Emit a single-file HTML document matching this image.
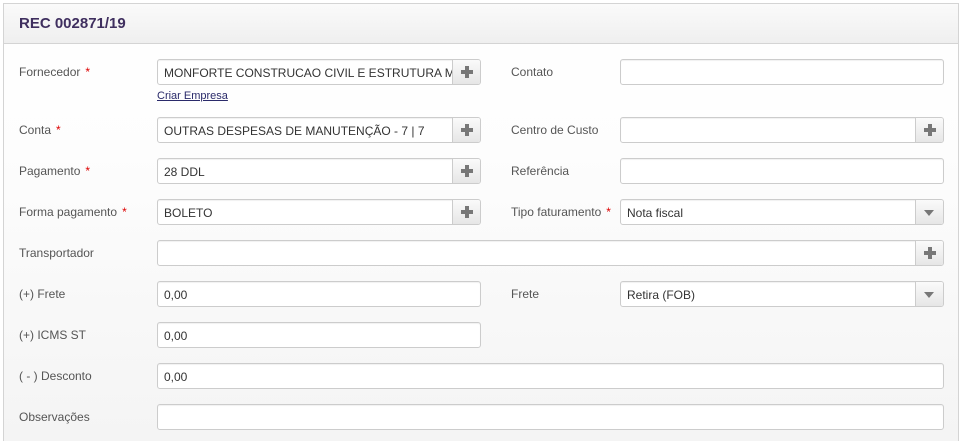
<!DOCTYPE html><html><head><meta charset="utf-8"><style>
*{box-sizing:border-box;margin:0;padding:0}
html,body{width:961px;height:441px;overflow:hidden}
body{background:#fff;font-family:"Liberation Sans",Arial,sans-serif;font-size:12px;color:#555;position:relative}
.box{position:absolute;left:3px;top:3px;width:956px;height:438px;border:1px solid #d4d4d4;border-bottom:none;background:linear-gradient(#fff 0,#fdfdfd 150px,#f4f4f4 438px)}
.hd{position:absolute;left:3px;top:3px;width:956px;height:41px;border:1px solid #d4d4d4;background:linear-gradient(#fafafa,#efefef)}
.hd b{position:absolute;left:15px;top:11px;font-size:15px;color:#3f2f5f}
.l{position:absolute;left:19px;color:#555}
.r{color:#d00;margin-left:5px}
.in{position:absolute;height:26px;border:1px solid #ccc;border-radius:3px;background:#fff;box-shadow:inset 0 1px 1px rgba(0,0,0,.06);padding:6px 6px;color:#333;white-space:nowrap;overflow:hidden}
.bt{position:absolute;right:0;top:0;width:28px;height:24px;border-left:1px solid #ccc;background:linear-gradient(#fafafa,#e6e6e6)}
.plus:before{content:"";position:absolute;left:8px;top:10px;width:12px;height:4px;background:#777}
.plus:after{content:"";position:absolute;left:12px;top:6px;width:4px;height:12px;background:#777}
.car:before{content:"";position:absolute;left:8px;top:10px;border-left:5px solid transparent;border-right:5px solid transparent;border-top:6px solid #777}
a{position:absolute;left:157px;top:90px;color:#2a2a6a;font-size:11px;text-decoration:underline}
</style></head><body>
<div class="box"></div>
<div class="hd"><b>REC 002871/19</b></div>

<div class="l" style="top:65px">Fornecedor<span class="r">*</span></div>
<div class="in" style="left:157px;top:59px;width:324px">MONFORTE CONSTRUCAO CIVIL E ESTRUTURA M<div class="bt plus"></div></div>
<a>Criar Empresa</a>
<div class="l" style="left:511px;top:65px">Contato</div>
<div class="in" style="left:620px;top:59px;width:324px"></div>

<div class="l" style="top:123px">Conta<span class="r">*</span></div>
<div class="in" style="left:157px;top:117px;width:324px">OUTRAS DESPESAS DE MANUTENÇÃO - 7 | 7<div class="bt plus"></div></div>
<div class="l" style="left:511px;top:123px">Centro de Custo</div>
<div class="in" style="left:620px;top:117px;width:324px"><div class="bt plus"></div></div>

<div class="l" style="top:164px">Pagamento<span class="r">*</span></div>
<div class="in" style="left:157px;top:158px;width:324px">28 DDL<div class="bt plus"></div></div>
<div class="l" style="left:511px;top:164px">Referência</div>
<div class="in" style="left:620px;top:158px;width:324px"></div>

<div class="l" style="top:205px">Forma pagamento<span class="r">*</span></div>
<div class="in" style="left:157px;top:199px;width:324px">BOLETO<div class="bt plus"></div></div>
<div class="l" style="left:511px;top:205px">Tipo faturamento<span class="r">*</span></div>
<div class="in" style="left:620px;top:199px;width:324px">Nota fiscal<div class="bt car"></div></div>

<div class="l" style="top:246px">Transportador</div>
<div class="in" style="left:157px;top:240px;width:787px"><div class="bt plus"></div></div>

<div class="l" style="top:287px">(+) Frete</div>
<div class="in" style="left:157px;top:281px;width:324px">0,00</div>
<div class="l" style="left:511px;top:287px">Frete</div>
<div class="in" style="left:620px;top:281px;width:324px">Retira (FOB)<div class="bt car"></div></div>

<div class="l" style="top:328px">(+) ICMS ST</div>
<div class="in" style="left:157px;top:322px;width:324px">0,00</div>

<div class="l" style="top:369px">( - ) Desconto</div>
<div class="in" style="left:157px;top:363px;width:787px">0,00</div>

<div class="l" style="top:410px">Observações</div>
<div class="in" style="left:157px;top:404px;width:787px"></div>
</body></html>
